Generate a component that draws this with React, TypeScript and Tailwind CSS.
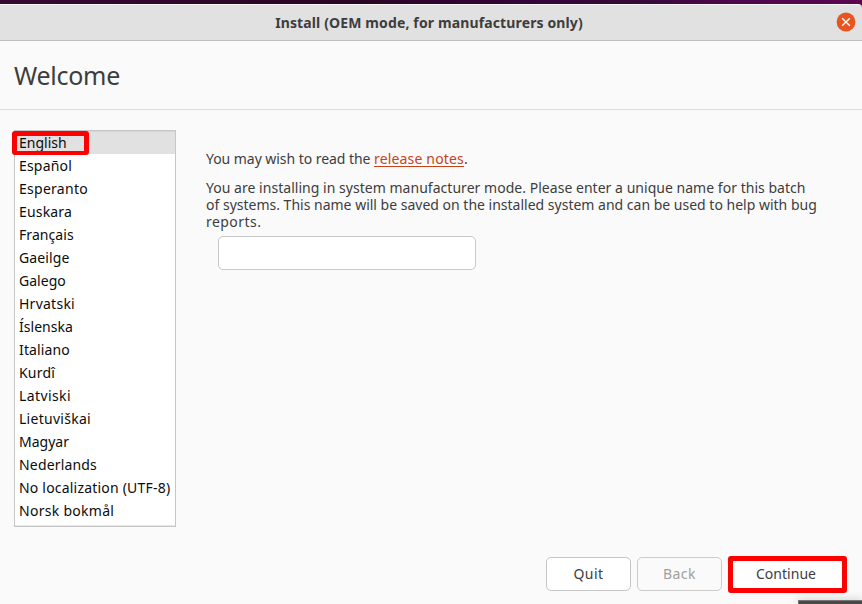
const languages: { name: string; spacing: string }[] = [
  { name: "English", spacing: "tracking-[0.01px]" },
  { name: "Español", spacing: "tracking-[0.19px]" },
  { name: "Esperanto", spacing: "tracking-[0.27px]" },
  { name: "Euskara", spacing: "tracking-[0.17px]" },
  { name: "Français", spacing: "tracking-[0.06px]" },
  { name: "Gaeilge", spacing: "tracking-[0.1px]" },
  { name: "Galego", spacing: "tracking-[0.02px]" },
  { name: "Hrvatski", spacing: "tracking-[0.25px]" },
  { name: "Íslenska", spacing: "tracking-[0.04px]" },
  { name: "Italiano", spacing: "tracking-[0.14px]" },
  { name: "Kurdî", spacing: "tracking-[0.19px]" },
  { name: "Latviski", spacing: "tracking-[0.4px]" },
  { name: "Lietuviškai", spacing: "tracking-[0.28px]" },
  { name: "Magyar", spacing: "tracking-[0.01px]" },
  { name: "Nederlands", spacing: "tracking-[0.17px]" },
  { name: "No localization (UTF-8)", spacing: "tracking-[0.2px]" },
  { name: "Norsk bokmål", spacing: "tracking-[0.28px]" },
];

function TitleBar() {
  return (
    <header className="bg-[linear-gradient(90deg,#350a31_0%,#2b0523_40%,#35053a_62%,#350a38_74%,#4d064b_84%,#5a0650_100%)] pt-1">
      <div className="relative flex h-[37px] items-center justify-center rounded-tr-[4px] border-t border-b border-t-[#f7f7f7] border-b-[#bdbdbd] bg-[#e1e1e1]">
        <h1 className="relative -left-[2px] text-[14px] leading-[20px] font-bold tracking-[0.13px] text-[#3d3d3d]">
          Install (OEM mode, for manufacturers only)
        </h1>
        <button aria-label="Close" className="absolute top-[7px] right-[6px] size-[20px]">
          <svg viewBox="0 0 20 20" className="size-[20px]">
            <circle cx="10" cy="10" r="9.4" fill="#e95420" />
            <path d="M6.2 6.2 13.8 13.8M13.8 6.2 6.2 13.8" stroke="#fff" strokeWidth="1.4" />
          </svg>
        </button>
      </div>
    </header>
  );
}

function LanguageList() {
  return (
    <ul className="h-[397px] w-[162px] shrink-0 border border-[#c6c6c6] bg-white shadow-[inset_0_-1px_0_#e6e6e6]">
      {languages.map((language, index) => (
        <li
          key={language.name}
          className={`relative h-[23px] pl-1 text-[14px] leading-[23px] whitespace-nowrap text-[#0c0c0c] ${language.spacing} ${
            index === 0 ? "bg-[#e1e1e1] shadow-[inset_0_1px_0_#d5d5d5]" : ""
          }`}
        >
          {language.name}
          {index === 0 && (
            <span className="absolute top-0 -left-[3px] h-[24px] w-[77px] rounded-[3px] border-[5px] border-t-[5px] border-b-[4px] border-[#ff0000]" />
          )}
        </li>
      ))}
    </ul>
  );
}

export default function App() {
  return (
    <div className="relative flex h-[604px] w-[862px] flex-col overflow-hidden bg-[#fafafa] font-['Noto_Sans','Open_Sans',sans-serif] text-[#3d3d3d]">
      <TitleBar />
      <div className="h-[69px] border-b border-[#dedede] pt-[17px] pl-[14px]">
        <h2 className="text-[25px] leading-[34px] tracking-[-0.27px]">Welcome</h2>
      </div>

      <main className="flex gap-[30px] pt-5 pl-[14px]">
        <LanguageList />
        <section className="pt-[20px] text-[14px] leading-[17px] whitespace-nowrap">
          <p className="h-[17px]">
            <span className="tracking-[-0.05px]">You may wish to read the </span>
            <a className="inline-block h-[17px] border-b border-[#c7431a] tracking-[0.17px] text-[#c7431a]">
              release notes
            </a>
            .
          </p>
          <p className="mt-3">
            <span className="tracking-[0.03px]">
              You are installing in system manufacturer mode. Please enter a unique name for this batch
            </span>
            <br />
            of systems. This name will be saved on the installed system and can be used to help with bug
            <br />
            <span className="tracking-[0.45px]">reports.</span>
          </p>
          <input
            aria-label="Batch name"
            className="mt-[6px] ml-3 block h-[34px] w-[258px] rounded-[5px] border border-[#c8c8c8] bg-white px-2 outline-none"
          />
        </section>
      </main>

      <footer className="mt-[29px] flex items-start justify-end gap-[6px] pr-[15px] text-[14px]">
        <button className="mt-px h-[34px] w-[85px] rounded-[5px] border border-[#c6c6c6] bg-white pb-[2px] tracking-[0.43px]">
          Quit
        </button>
        <button className="mt-px h-[34px] w-[85px] rounded-[5px] border border-[#cbcbcb] bg-[#fafafa] pb-[2px] tracking-[0.46px] text-[#a0a0a0]">
          Back
        </button>
        <button className="h-[37px] w-[119px] rounded-[3px] border-[5px] border-[#ff0000] bg-white pr-[3px] pb-[3px] tracking-[0.02px]">
          Continue
        </button>
      </footer>

      <div className="absolute right-0 bottom-0 h-1 w-[64px] border-t border-l border-[#777] bg-[#494949] shadow-[0_0_8px_rgba(0,0,0,0.25)]" />
    </div>
  );
}
